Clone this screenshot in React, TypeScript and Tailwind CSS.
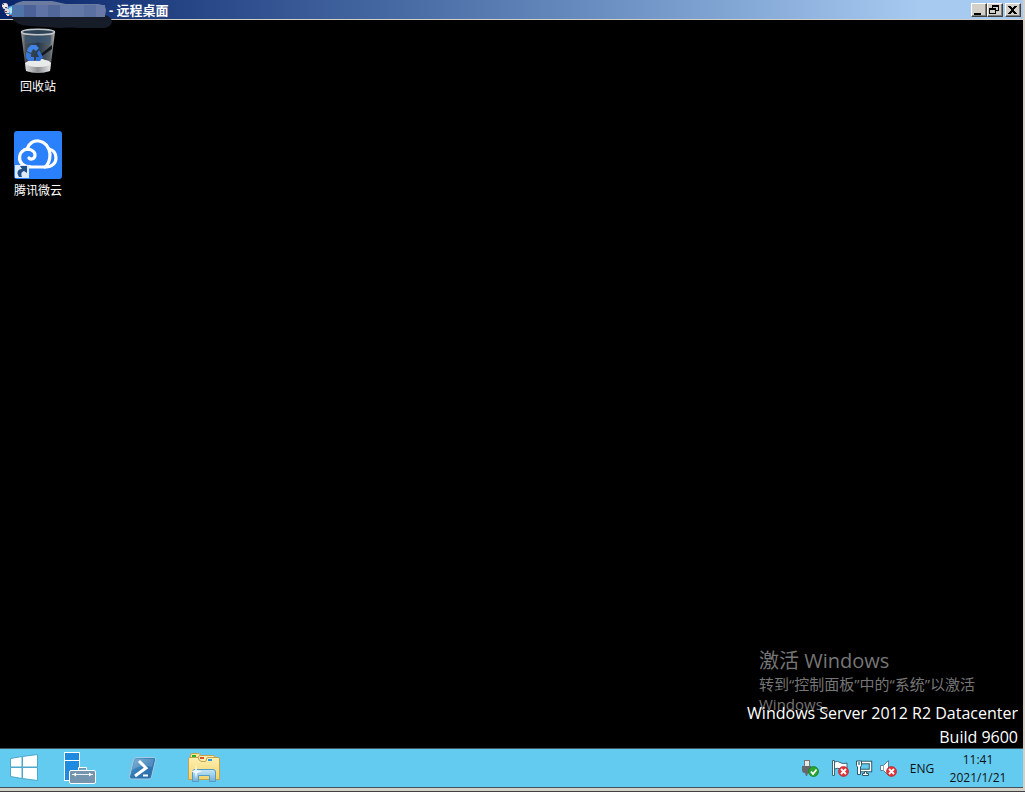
import type { ReactNode } from 'react';

function RemoteIcon() {
  return (
    <svg width="16" height="16" viewBox="0 0 16 16">
      <path d="M7 5 L14 3 L14 12 L9 14 Z" fill="#3f9be0" />
      <path d="M9 6 L12 5 L12 11 L10 12 Z" fill="#a9e4fa" />
      <circle cx="5" cy="4" r="3" fill="#ece9ec" />
      <circle cx="7" cy="9" r="2.5" fill="#e4dcdc" />
      <path d="M3 2h1v1H3zM5 5h2v1H5zM2 5h1v1H2zM5 9h2v1H5z" fill="#6b3b48" />
      <path d="M6 12h3v2H7v-1H6z" fill="#e9d9cf" />
      <path d="M9 13h3v1H9z" fill="#8d3340" />
    </svg>
  );
}

// Smudged-out host name that hangs over the bottom edge of the title bar
function HiddenHost() {
  const blocks = ['#4f74aa', '#4a6297', '#5f74a5', '#52689b', '#6579a8', '#6278a6', '#5970a1', '#6879a7'];
  return (
    <svg width="104" height="28" viewBox="0 0 104 28" className="pointer-events-none absolute left-2 top-0">
      <path d="M4 16 L97 15 Q104 17 104 22 Q103 27 96 28 L72 28 Q62 27 52 28 L22 26 Q7 25 4 18 Z" fill="#171c29" />
      <path d="M4 8 Q5 3 15 1 L44 1 L58 4 L90 4 Q98 5 98 10 L97 16 L4 16 Z" fill="#6c7ca0" />
      {blocks.map((color, i) => (
        <rect key={i} x={4 + i * 12} y="5" width={i === 7 ? 9 : 12} height="12" fill={color} />
      ))}
    </svg>
  );
}

function RecycleBinIcon() {
  return (
    <svg width="48" height="48" viewBox="0 0 48 48">
      <defs>
        <linearGradient id="bin" x1="0" x2="1" y1="0" y2="0">
          <stop offset="0" stopColor="#a3a8ac" />
          <stop offset=".14" stopColor="#454d54" />
          <stop offset=".5" stopColor="#26394b" />
          <stop offset=".85" stopColor="#5b6065" />
          <stop offset="1" stopColor="#b5b8bb" />
        </linearGradient>
        <linearGradient id="binBase" x1="0" x2="1" y1="0" y2="0">
          <stop offset="0" stopColor="#dcdddd" />
          <stop offset=".5" stopColor="#8b8e90" />
          <stop offset="1" stopColor="#e8e8e8" />
        </linearGradient>
      </defs>
      <path d="M7 5 L41 5 L36 44 Q24 48 12 44 Z" fill="url(#bin)" />
      <path d="M11 9 L37 9 L36 17 Q24 14 12 17 Z" fill="#3c5a76" opacity=".7" />
      <path d="M38 18 L27 27 L28 29 L38 22 Z" fill="#10161d" />
      <path d="M11 36 L37 36 L36 44 Q24 48 12 44 Z" fill="url(#binBase)" />
      <path d="M11 36 Q16 32 21 34 Q26 30 31 33 Q35 33 37 36 Q36 40 24 40 Q13 40 11 36 Z" fill="#e9eaea" />
      <path d="M14 21 L17 18 L22 18 L25 21 L22 24 L19 22 L17 26 L13 24 Z" fill="#4184e8" />
      <path d="M12 25 L17 27 L17 30 L20 30 L20 34 L15 34 L12 31 Z" fill="#3b78dc" />
      <path d="M25 23 L29 30 L26 34 L22 34 L22 30 L25 30 L23 26 Z" fill="#2f6cd4" />
      <ellipse cx="24" cy="5" rx="16.5" ry="2.8" fill="#2e4356" stroke="#c3c9cd" strokeWidth="1.5" />
    </svg>
  );
}

function WeiyunIcon() {
  return (
    <svg width="48" height="48" viewBox="0 0 48 48">
      <rect width="48" height="48" rx="3" fill="#2b80fb" />
      <g fill="none" stroke="#fff" strokeWidth="3.2" strokeLinecap="round">
        <path d="M15 27 C17 29 21 28 21 24 C21 19 14 17 10 19 C5 22 4 29 8 33 C11 36 14 36 18 36 H32 C38 36 42 32 42 27 C42 22 39 19 35 18" />
        <path d="M13 18 C15 12 20 9 25 10 C31 11 35 16 36 23 C36 29 35 33 31 36" />
      </g>
      <rect x="1" y="34" width="14" height="13" fill="#dcebfb" />
      <path d="M5 46 C2 41 4 38 8 38 L6 35 L13 35 L13 42 L10 40 C7 41 7 43 8 46 Z" fill="#1f4f86" />
    </svg>
  );
}

function StartIcon() {
  return (
    <svg width="28" height="28" viewBox="0 0 28 28" fill="#fff" stroke="#4da9c9" strokeWidth="1">
      <path d="M.5 4.5 L12 2.5 V13 H.5 Z" />
      <path d="M12.5 2.5 L27.5 .5 V13 H12.5 Z" />
      <path d="M.5 13.5 H12 V24.5 L.5 22.5 Z" />
      <path d="M12.5 13.5 H27.5 V26.5 L12.5 24.5 Z" />
    </svg>
  );
}

function ServerManagerIcon() {
  return (
    <svg width="32" height="32" viewBox="0 0 32 32">
      <rect x=".5" y=".5" width="15" height="28" fill="#1f8be0" stroke="#fff" />
      <path d="M1 8.5 H15" stroke="#fff" />
      <path d="M14.5 19 V15.5 H22.5 V19 Z" fill="#7594ae" stroke="#fff" />
      <path d="M16.5 19 V17.5 H20.5 V19 Z" fill="#63caf0" />
      <rect x="5.5" y="18.5" width="26" height="13" rx="1.5" fill="#7594ae" stroke="#fff" />
      <path d="M8 22.5 H29" stroke="#e6f4fb" />
      <path d="M9 22.500 L12 20.500 V24.500 Z M28 22.500 L25 20.500 V24.500 Z" fill="#fff" />
    </svg>
  );
}

function PowerShellIcon() {
  return (
    <svg width="32" height="32" viewBox="0 0 32 32">
      <defs>
        <linearGradient id="ps" x1="0" x2="1" y1="0" y2="1">
          <stop offset="0" stopColor="#6ba9d2" />
          <stop offset=".5" stopColor="#2f78b4" />
          <stop offset="1" stopColor="#2a6dab" />
        </linearGradient>
      </defs>
      <path d="M3 8 H9 M2 12 H8 M2 16 H7 M1 20 H6 M1 24 H5" stroke="#82bedc" strokeWidth="1" />
      <path d="M10 5.5 H28 Q30 5.5 29.500 8 L25.500 25 Q25 27 23 27 H5.500 Q3 27 3.500 24.500 L7.500 8 Q8 5.500 10 5.500 Z" fill="url(#ps)" stroke="#a5cbe3" />
      <path d="M9 7 H28 L26 15 Q16 12 6 18 Z" fill="#fff" opacity=".18" />
      <path d="M13 9 L20 16 L9 24" fill="none" stroke="#fff" strokeWidth="3" />
      <path d="M17 23.500 H22" stroke="#fff" strokeWidth="2" />
    </svg>
  );
}

function ExplorerIcon() {
  return (
    <svg width="34" height="32" viewBox="0 0 34 32">
      <defs>
        <linearGradient id="folder" x1="0" x2="0" y1="0" y2="1">
          <stop offset="0" stopColor="#fff0b0" />
          <stop offset="1" stopColor="#f0d36c" />
        </linearGradient>
        <linearGradient id="stand" x1="0" x2="0" y1="0" y2="1">
          <stop offset="0" stopColor="#c5e8f8" />
          <stop offset="1" stopColor="#72b2d9" />
        </linearGradient>
      </defs>
      <path d="M3.500 10 V3.500 Q3.500 1.500 5 1.500 H12 L14 3.500 H20 V10 Z" fill="#f7e59a" stroke="#c6a34b" />
      <path d="M11.500 10 V5.500 Q11.500 3.500 13 3.500 H26 Q27.500 3.500 27.500 5 V10 Z" fill="#fbeeb2" stroke="#c6a34b" />
      <path d="M5 3h4v2H5z" fill="#1fb530" />
      <path d="M13 5h4v2h-4z" fill="#dc4d2c" />
      <path d="M1.500 27.500 V7 Q1.500 5.500 3 5.500 H11 Q12 9.500 15 9.500 H18 Q19.500 9.500 19.500 7 Q19.500 5.500 21 5.500 H31 Q32.500 5.500 32.500 7 V27.500 Z" fill="url(#folder)" stroke="#c6a34b" />
      <path d="M21 7h4v2h-4z" fill="#2e9be0" />
      <path d="M5.500 29.500 V20 Q5.500 17.500 8 17.500 H26 Q28.500 17.500 28.500 20 V29.500 H22.500 V23.500 H11.500 V29.500 Z" fill="url(#stand)" stroke="#559cc5" />
      <path d="M9 12 L10 18 L15 19.500 L10 21 L9 27 L8 21 L4 19.500 L8 18 Z" fill="#fff" opacity=".8" />
    </svg>
  );
}

function ErrorBadge() {
  return (
    <g>
      <circle cx="11.5" cy="11.5" r="5" fill="#e23338" stroke="#b81d24" strokeWidth=".6" />
      <path d="M9 9 L14 14 M14 9 L9 14" stroke="#fff" strokeWidth="1.8" />
    </g>
  );
}

function UsbIcon() {
  return (
    <svg width="17" height="17" viewBox="0 0 17 17">
      <rect x="2.500" y=".5" width="5" height="6" fill="#e8e8e8" stroke="#777" />
      <path d="M0 6 H9 V11 Q9 13 6 13 L5 16 H4 L3 13 Q0 13 0 10 Z" fill="#65676d" />
      <circle cx="11.500" cy="11.500" r="5" fill="#2ba52f" stroke="#137718" strokeWidth=".7" />
      <path d="M9 11.500 L11 14 L14.500 9.500" fill="none" stroke="#fff" strokeWidth="1.8" />
    </svg>
  );
}

function FlagIcon() {
  return (
    <svg width="17" height="17" viewBox="0 0 17 17">
      <path d="M.5 .5 H2.500 V15.500 H.5 Z" fill="#fff" stroke="#3d6675" />
      <path d="M2.500 2 Q6 .5 8 2.500 Q11 4.500 15 3 V10 Q11 11 8 9 Q6 7.500 2.500 9 Z" fill="#fff" stroke="#3d6675" />
      <ErrorBadge />
    </svg>
  );
}

function NetworkIcon() {
  return (
    <svg width="17" height="17" viewBox="0 0 17 17">
      <path d="M5 2.500 H14.500 V10.500 H5" fill="none" stroke="#2f5868" strokeWidth="3.400" />
      <path d="M5 2.500 H14.500 V10.500 H5" fill="none" stroke="#fff" strokeWidth="1.400" />
      <path d="M8.500 11.500 H10.500 V13.500 H12.500 V15.500 H6.500 V13.500 H8.500 Z" fill="#fff" stroke="#2f5868" />
      <path d="M.5 1 H5.500 V5.500 L4.500 7 V14.500 H1.500 V7 L.5 5.500 Z" fill="#fff" stroke="#2f5868" />
      <path d="M2 2 V5 H4 V2 Z" fill="#6fa3b5" />
    </svg>
  );
}

function VolumeIcon() {
  return (
    <svg width="17" height="17" viewBox="0 0 17 17">
      <path d="M.5 5.500 H3.500 L8.500 .5 V15.500 L3.500 10.500 H.5 Z" fill="#fff" stroke="#5a8495" />
      <path d="M3.500 6 V10" stroke="#8fb0bd" />
      <ErrorBadge />
    </svg>
  );
}

function WindowButton({ label, children }: { label: string; children: ReactNode }) {
  return (
    <button
      type="button"
      aria-label={label}
      className="h-[14px] w-4 border border-b-[#404040] border-l-white border-r-[#404040] border-t-white bg-[#d4d0c8] shadow-[inset_-1px_-1px_0_#808080]"
    >
      <svg width="14" height="12" viewBox="0 0 14 12" shapeRendering="crispEdges">
        {children}
      </svg>
    </button>
  );
}

function TitleBar() {
  return (
    <header className="relative z-10 flex h-5 shrink-0 items-center justify-between border-b border-[#d4d0c8] bg-linear-to-r from-[#0a246a] to-[#a6caf0] to-90% pr-0.5">
      <div className="flex items-center">
        <RemoteIcon />
        <HiddenHost />
        <h1 className="ml-[93px] text-[13px] font-bold leading-4 text-white">- 远程桌面</h1>
      </div>
      <div className="flex">
        <WindowButton label="最小化">
          <path d="M2 9h7v2H2z" fill="#000" />
        </WindowButton>
        <WindowButton label="还原">
          <path d="M4 1h7v6H8V6h2V3H5v1H4zM1 4h7v6H1zM2 6v3h5V6z" fill="#000" fillRule="evenodd" />
        </WindowButton>
        <span className="w-0.5" />
        <WindowButton label="关闭">
          <path d="M2 2h3v1h1v1h1V3h1V2h3v1h-1v1H9v1H8v2h1v1h1v1h1v1H8V9H7V8H6v1H5v1H2V9h1V8h1V7h1V5H4V4H3V3H2z" fill="#000" />
        </WindowButton>
      </div>
    </header>
  );
}

function DesktopIcon({ label, children }: { label: string; children: ReactNode }) {
  return (
    <button type="button" className="flex w-[76px] flex-col items-center gap-1 text-xs leading-4 text-white">
      {children}
      <span>{label}</span>
    </button>
  );
}

function Desktop() {
  return (
    <main className="relative flex min-h-0 flex-1 flex-col items-start gap-9 bg-black pt-[7px]">
      <DesktopIcon label="回收站">
        <RecycleBinIcon />
      </DesktopIcon>
      <DesktopIcon label="腾讯微云">
        <WeiyunIcon />
      </DesktopIcon>

      {/* Activation watermark, with the build text drawn over its last line */}
      <div className="absolute bottom-[34px] right-4 w-[248px] text-[15px] leading-5 text-[#767676]">
        <p className="text-xl leading-[26px]">激活 Windows</p>
        <p>
          转到“控制面板”中的“系统”以激活
          <br />
          Windows。
        </p>
      </div>
      <div className="absolute -bottom-px right-[5px] text-right text-base leading-6 text-white">
        <p>Windows Server 2012 R2 Datacenter</p>
        <p>Build 9600</p>
      </div>
    </main>
  );
}

function Taskbar() {
  const apps = [
    { label: '服务器管理器', icon: <ServerManagerIcon /> },
    { label: 'Windows PowerShell', icon: <PowerShellIcon /> },
    { label: '文件资源管理器', icon: <ExplorerIcon /> },
  ];
  const tray = [
    { label: '安全删除硬件', icon: <UsbIcon /> },
    { label: '操作中心', icon: <FlagIcon /> },
    { label: '网络', icon: <NetworkIcon /> },
    { label: '扬声器', icon: <VolumeIcon /> },
  ];

  return (
    <footer className="flex h-10 shrink-0 items-center justify-between border-y border-[#40545e] bg-[#63caf0] text-xs text-[#111]">
      <nav className="flex items-center">
        <button type="button" aria-label="开始" className="mr-px flex w-12 justify-center">
          <StartIcon />
        </button>
        {apps.map((app) => (
          <button key={app.label} type="button" aria-label={app.label} className="flex w-[62px] justify-center">
            {app.icon}
          </button>
        ))}
      </nav>
      <div className="flex items-center pr-[15px]">
        <div className="flex items-center gap-[7px]">
          {tray.map((item) => (
            <button key={item.label} type="button" aria-label={item.label} className="first:mr-1.5">
              {item.icon}
            </button>
          ))}
        </div>
        <button type="button" className="ml-3 w-[26px] pt-0.5">ENG</button>
        <button type="button" className="ml-[13px] w-[60px] pt-0.5 text-center leading-[18px]">
          <time dateTime="2021-01-21T11:41">
            11:41
            <br />
            2021/1/21
          </time>
        </button>
      </div>
    </footer>
  );
}

export default function App() {
  return (
    <div className="flex h-screen flex-col overflow-hidden border-b border-[#404040] bg-[#d4d0c8] pb-[3px] pr-0.5 font-['Open_Sans','Noto_Sans_CJK_SC',sans-serif]">
      <TitleBar />
      <Desktop />
      <Taskbar />
    </div>
  );
}
